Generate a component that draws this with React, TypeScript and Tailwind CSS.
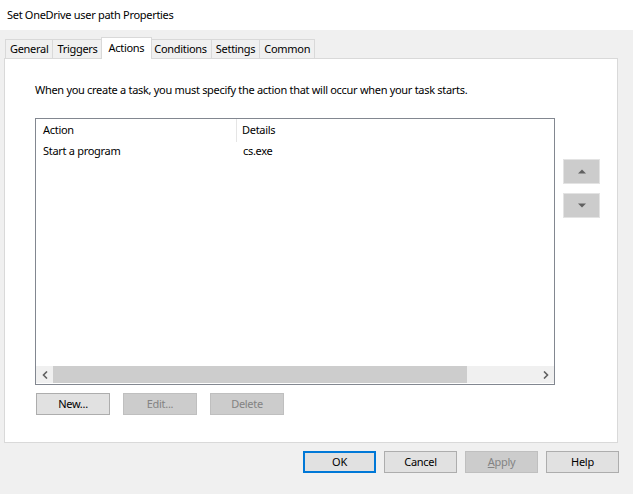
import React from "react";

const TABS = ["General", "Triggers", "Actions", "Conditions", "Settings", "Common"];

function Btn({
  label,
  disabled,
  primary,
  w = "w-[74px]",
}: {
  label: React.ReactNode;
  disabled?: boolean;
  primary?: boolean;
  w?: string;
}) {
  const tone = disabled
    ? "bg-[#cccccc] border-[#bfbfbf] text-[#838383]"
    : primary
    ? "bg-[#e1e1e1] border-[#0078d7] border-2 text-black"
    : "bg-[#e1e1e1] border-[#adadad] text-black";
  return (
    <div className={`${w} h-[22px] flex items-center justify-center border ${tone}`}>
      {label}
    </div>
  );
}

function Arrow({ dir }: { dir: "up" | "down" }) {
  return (
    <div className="w-[37px] h-[25px] bg-[#cccccc] border border-[#e3e3e3] flex items-center justify-center">
      <svg width="8" height="5" viewBox="0 0 8 5">
        {dir === "up" ? (
          <path d="M0 4.5 L4 0.5 L8 4.5 Z" fill="#606060" />
        ) : (
          <path d="M0 0.5 L8 0.5 L4 4.5 Z" fill="#606060" />
        )}
      </svg>
    </div>
  );
}

export default function App() {
  return (
    <div
      className="w-[633px] h-[494px] bg-[#f0f0f0] flex flex-col text-[11px] tracking-[-0.3px] text-black overflow-hidden"
      style={{ fontFamily: '"Segoe UI", "Noto Sans", sans-serif' }}
    >
      {/* Title */}
      <div className="h-[30px] bg-white flex items-center px-[7px]">
        Set OneDrive user path Properties
      </div>

      {/* Tabs */}
      <div className="pt-[7px] pl-[5px] flex items-end h-[28px]">
        {TABS.map((t) => {
          const active = t === "Actions";
          return (
            <div
              key={t}
              className={
                active
                  ? "relative z-10 -mx-[2px] h-[22px] -mb-px px-[7px] pb-[2px] bg-white border border-b-0 border-[#d9d9d9] flex items-center leading-none"
                  : "h-[19px] px-[4px] pb-[1px] bg-[#f0f0f0] border border-b-0 border-[#d9d9d9] -ml-px first:ml-0 flex items-center leading-none"
              }
            >
              {t}
            </div>
          );
        })}
      </div>

      {/* Panel */}
      <div className="ml-[4px] w-[614px] h-[385px] bg-white border border-[#d9d9d9] flex flex-col pl-[30px] pt-[23px]">
        <div className="leading-[15px]">
          When you create a task, you must specify the action that will occur when your task starts.
        </div>

        <div className="flex mt-[21px]">
          {/* List */}
          <div className="w-[520px] h-[267px] border border-[#828790] flex flex-col">
            <div className="flex h-[23px] items-stretch">
              <div className="w-[201px] pl-[7px] flex items-center border-r border-[#e5e5e5]">Action</div>
              <div className="pl-[5px] flex items-center">Details</div>
            </div>
            <div className="flex h-[18px] items-center">
              <div className="w-[201px] pl-[7px]">Start a program</div>
              <div className="pl-[6px]">cs.exe</div>
            </div>
            <div className="flex-1" />
            <div className="h-[17px] mb-[1px] flex bg-[#f0f0f0]">
              <div className="w-[17px] flex items-center justify-center">
                <svg width="6" height="8" viewBox="0 0 6 8">
                  <path d="M5 0.5 L1.5 4 L5 7.5" fill="none" stroke="#606060" strokeWidth="1.6" />
                </svg>
              </div>
              <div className="w-[414px] bg-[#cdcdcd]" />
              <div className="flex-1" />
              <div className="w-[17px] flex items-center justify-center">
                <svg width="6" height="8" viewBox="0 0 6 8">
                  <path d="M1 0.5 L4.5 4 L1 7.5" fill="none" stroke="#606060" strokeWidth="1.6" />
                </svg>
              </div>
            </div>
          </div>

          {/* Move buttons */}
          <div className="ml-[8px] pt-[41px] flex flex-col gap-[9px]">
            <Arrow dir="up" />
            <Arrow dir="down" />
          </div>
        </div>

        <div className="flex gap-[13px] mt-[8px] ml-[1px]">
          <Btn label="New..." />
          <Btn label="Edit..." disabled />
          <Btn label="Delete" disabled />
        </div>
      </div>

      {/* Dialog buttons */}
      <div className="flex justify-end gap-[8px] pr-[14px] mt-[8px]">
        <Btn label="OK" primary w="w-[73px]" />
        <Btn label="Cancel" w="w-[73px]" />
        <Btn
          w="w-[73px]"
          label={
            <span>
              <span className="underline">A</span>pply
            </span>
          }
          disabled
        />
        <Btn label="Help" w="w-[73px]" />
      </div>
    </div>
  );
}
